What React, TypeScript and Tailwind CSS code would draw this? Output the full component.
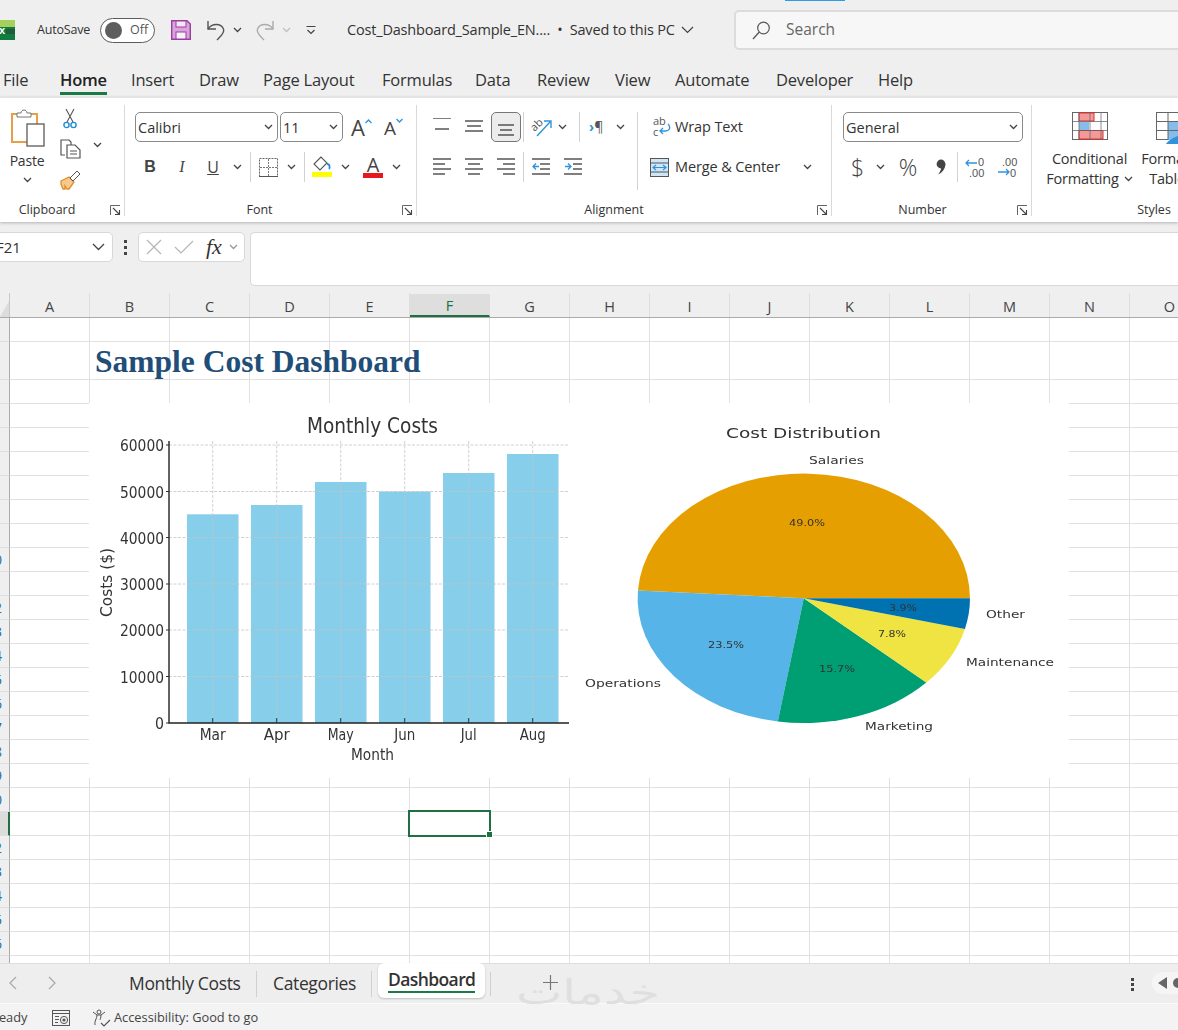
import React from "react";

const UI = "font-['Open_Sans','Noto_Sans',sans-serif]";

function Chev({ className = "", color = "#444" }: { className?: string; color?: string }) {
  return (
    <svg width="9" height="6" viewBox="0 0 9 6" className={"shrink-0 " + className}>
      <polyline points="1,1 4.5,4.5 8,1" fill="none" stroke={color} strokeWidth="1.3" />
    </svg>
  );
}

function Launcher() {
  return (
    <svg width="11" height="11" viewBox="0 0 11 11" className="absolute right-[3px] top-[0px]">
      <path d="M0.5 10V0.5H10" fill="none" stroke="#666" />
      <path d="M3 3L9.5 9.5M9.5 5V9.5H5" fill="none" stroke="#444" strokeWidth="1.1" />
    </svg>
  );
}

function Lines({ rows, w = 18, h = 18 }: { rows: number[][]; w?: number; h?: number }) {
  return (
    <svg width={w} height={h} viewBox={`0 0 ${w} ${h}`} className="shrink-0">
      {rows.map((r, i) => (
        <line key={i} x1={r[0]} x2={r[1]} y1={r[2]} y2={r[2]} stroke="#555" strokeWidth="1.5" />
      ))}
    </svg>
  );
}

function Group({ w, label, pad, children }: { w: string; label: string; pad: string; children: React.ReactNode }) {
  return (
    <div className={"shrink-0 h-[111px] flex flex-col border-r border-[#d9d9d9] " + w}>
      <div className="flex-1 min-h-0 pt-[7px]">{children}</div>
      <div className={"relative h-[11px] flex items-center justify-center text-[12.5px] leading-[11px] text-[#333] " + pad}>
        <span className="relative top-[-1px]">{label}</span>
        <Launcher />
      </div>
    </div>
  );
}

function Select({ w, text, size = "text-[14.5px]" }: { w: string; text: string; size?: string }) {
  return (
    <div className={"h-[30px] rounded-[5px] border border-[#8a8a8a] bg-white flex items-center justify-between pl-[2px] pr-[4px] shrink-0 " + w}>
      <span className={"text-[#333] relative top-px " + size}>{text}</span>
      <Chev />
    </div>
  );
}

function Sep({ h = "h-[30px]", m = "" }: { h?: string; m?: string }) {
  return <div className={"w-px bg-[#d2d2d2] shrink-0 " + h + " " + m} />;
}

function Undo({ color, className = "" }: { color: string; className?: string }) {
  return (
    <svg width="20" height="22" viewBox="0 0 20 22" className={className}>
      <path d="M2 2v8h8" fill="none" stroke={color} strokeWidth="1.4" />
      <path d="M2 10C6 4 15 4 17.5 10C19 14 14 18 11 21" fill="none" stroke={color} strokeWidth="1.4" />
    </svg>
  );
}

function TitleBar() {
  return (
    <div className="relative h-[60px] shrink-0 flex items-center text-[#333]">
      <div className="absolute left-[785px] top-0 w-[60px] h-px bg-[#2f9be6]" />
      <svg width="15" height="20" viewBox="0 0 15 20" className="mt-[-1px]">
        <rect width="15" height="20" fill="#107c41" />
        <rect width="15" height="7" fill="#a6cf5c" />
        <rect x="6" y="9" width="9" height="5" fill="#1f5c38" />
        <text x="-1" y="14" fontSize="11" fontWeight="700" fill="#fff" fontFamily="Liberation Sans">x</text>
      </svg>
      <span className="ml-[22px] text-[12.5px] tracking-[-0.2px] w-[63px]">AutoSave</span>
      <div className="w-[55px] h-[25px] rounded-full border border-[#5c5c5c] bg-white flex items-center pl-[4px] shrink-0">
        <div className="w-[17px] h-[17px] rounded-full bg-[#5e5e5e]" />
        <span className="ml-[8px] text-[12.5px] text-[#555]">Off</span>
      </div>
      <svg width="20" height="20" viewBox="0 0 20 20" className="ml-[16px] shrink-0">
        <path d="M0.7 0.7H16L19.3 4V19.3H0.7Z" fill="#d9a3dc" stroke="#9b3f9f" strokeWidth="1.4" />
        <rect x="5" y="1" width="10" height="6" fill="#f4e6f5" stroke="#9b3f9f" />
        <rect x="5" y="12" width="10" height="7" fill="#f9f1f9" stroke="#9b3f9f" />
      </svg>
      <Undo color="#555" className="ml-[15px]" />
      <Chev className="ml-[7px]" />
      <Undo color="#ababab" className="ml-[13px] scale-x-[-1]" />
      <Chev className="ml-[7px]" color="#c0c0c0" />
      <svg width="10" height="10" viewBox="0 0 10 10" className="ml-[15px] shrink-0">
        <line x1="0.5" x2="9.5" y1="1.5" y2="1.5" stroke="#444" />
        <polyline points="1.5,5 5,8.5 8.5,5" fill="none" stroke="#444" strokeWidth="1.2" />
      </svg>
      <span className="ml-[31px] text-[14.5px] tracking-[-0.18px] w-[335px] whitespace-nowrap">Cost_Dashboard_Sample_EN....&nbsp; •&nbsp; Saved to this PC</span>
      <svg width="13" height="8" viewBox="0 0 13 8" className="ml-[-1px] shrink-0">
        <polyline points="1,1 6.5,6.5 12,1" fill="none" stroke="#444" strokeWidth="1.2" />
      </svg>
      <div className="absolute left-[734px] top-[10px] w-[460px] h-[40px] rounded-[5px] border-2 border-[#dcdcdc] bg-[#f7f7f7] flex items-center">
        <svg width="19" height="19" viewBox="0 0 19 19" className="ml-[16px] shrink-0">
          <circle cx="11.5" cy="7" r="5.8" fill="none" stroke="#555" strokeWidth="1.2" />
          <line x1="7.3" y1="11" x2="1" y2="18" stroke="#555" strokeWidth="1.3" />
        </svg>
        <span className="ml-[15px] text-[15.5px] text-[#666]">Search</span>
      </div>
    </div>
  );
}

const TABS: [string, string][] = [
  ["File", "w-[57px]"],
  ["Home", "w-[71px] font-semibold"],
  ["Insert", "w-[68px]"],
  ["Draw", "w-[64px]"],
  ["Page Layout", "w-[119px]"],
  ["Formulas", "w-[93px]"],
  ["Data", "w-[62px]"],
  ["Review", "w-[78px]"],
  ["View", "w-[60px]"],
  ["Automate", "w-[101px]"],
  ["Developer", "w-[102px]"],
  ["Help", "w-[60px]"],
];

function MenuTabs() {
  return (
    <div className="h-[37px] shrink-0 flex pl-[3px] pt-[8px] text-[16.5px] tracking-[-0.2px] text-[#333] leading-[24px]">
      {TABS.map(([t, c]) => (
        <div key={t} className={"shrink-0 " + c}>
          <span className={"inline-block h-[27px] whitespace-nowrap " + (t === "Home" ? "border-b-[3px] border-[#1a7a45] text-[#222]" : "")}>{t}</span>
        </div>
      ))}
    </div>
  );
}

function ClipboardGroup() {
  return (
    <Group w="w-[125px]" label="Clipboard" pad="pr-[30px]">
      <div className="flex">
        <div className="w-[54px] flex flex-col items-center">
          <svg width="36" height="40" viewBox="0 0 36 40" className="mt-[-4px] ml-[2px]">
            <rect x="2" y="6" width="25" height="28" fill="#fff" stroke="#e6a04a" strokeWidth="2" />
            <path d="M7 9V5H11C11 1 17 1 17 5H21V9Z" fill="#fff" stroke="#777" />
            <rect x="17" y="16" width="17" height="22" fill="#fff" stroke="#666" strokeWidth="1.4" />
          </svg>
          <span className="text-[14px] tracking-[-0.2px] text-[#333] mt-[4px] leading-[18px]">Paste</span>
          <Chev className="mt-[7px]" />
        </div>
        <div className="flex flex-col items-center w-[32px]">
          <svg width="14" height="21" viewBox="0 0 14 21" className="mt-[-4px]">
            <path d="M3 1L10 14M11 1L4 14" stroke="#555" strokeWidth="1.1" fill="none" />
            <circle cx="3.5" cy="17" r="2.6" fill="none" stroke="#1f8ad8" strokeWidth="1.4" />
            <circle cx="10.5" cy="17" r="2.6" fill="none" stroke="#1f8ad8" strokeWidth="1.4" />
          </svg>
          <svg width="21" height="20" viewBox="0 0 21 20" className="mt-[10px]">
            <path d="M5 16H1V1H9L11 3V6" fill="none" stroke="#555" strokeWidth="1.2" />
            <path d="M7 6H15L20 11V19H7Z" fill="#fff" stroke="#555" strokeWidth="1.2" />
            <path d="M10 12H17M10 15H17" stroke="#555" />
          </svg>
          <svg width="21" height="20" viewBox="0 0 21 20" className="mt-[11px]">
            <path d="M1 11L9 7L14 12L9 19H7L5 16L5 19H3L1 14Z" fill="#f6c98f" stroke="#de8f2a" strokeWidth="1.3" />
            <path d="M10 8L17 1L20 4L13 11Z" fill="#fff" stroke="#555" />
          </svg>
        </div>
        <Chev className="ml-[7px] mt-[30px]" />
      </div>
    </Group>
  );
}

function BigA({ up }: { up: boolean }) {
  return (
    <div className="flex items-start shrink-0">
      <span className={(up ? "text-[22px]" : "text-[19px] mt-[2px]") + " leading-[26px] text-[#444]"}>A</span>
      <svg width="7" height="5" viewBox="0 0 7 5" className="mt-[5px] shrink-0">
        <polyline points={up ? "0.5,4 3.5,1 6.5,4" : "0.5,1 3.5,4 6.5,1"} fill="none" stroke="#2e93dc" strokeWidth="1.3" />
      </svg>
    </div>
  );
}

function FontGroup() {
  return (
    <Group w="w-[292px]" label="Font" pad="pr-[22px]">
      <div className="flex items-center pl-[10px]">
        <Select w="w-[143px]" text="Calibri" />
        <Select w="w-[63px] ml-[2px]" text="11" />
        <div className="ml-[8px]"><BigA up /></div>
        <div className="ml-[12px]"><BigA up={false} /></div>
      </div>
      <div className="flex items-center mt-[10px] h-[30px]">
        <span className="ml-[9px] w-[32px] text-center text-[16px] font-bold font-['Liberation_Sans'] text-[#444]">B</span>
        <span className="w-[32px] text-center text-[16px] italic font-['Liberation_Serif'] text-[#444]">I</span>
        <span className="w-[30px] text-center text-[16px] underline text-[#444]">U</span>
        <Chev className="ml-[5px]" />
        <Sep m="ml-[8px]" />
        <svg width="19" height="19" viewBox="0 0 19 19" className="ml-[8px] shrink-0">
          <rect x="0.5" y="0.5" width="18" height="18" fill="none" stroke="#666" strokeDasharray="2 1" />
          <path d="M9.5 1V18M1 9.5H18" stroke="#777" strokeDasharray="2 1" />
          <line x1="0" x2="19" y1="18.5" y2="18.5" stroke="#555" />
        </svg>
        <Chev className="ml-[9px]" />
        <Sep m="ml-[8px]" />
        <svg width="20" height="22" viewBox="0 0 20 22" className="ml-[7px] shrink-0">
          <path d="M9 1L2 8L8 14L15 7Z" fill="#fff" stroke="#555" strokeWidth="1.1" />
          <path d="M15 8C18 8 18 12 17 13" fill="none" stroke="#1f8ad8" strokeWidth="1.8" />
          <rect x="0" y="16" width="20" height="5" fill="#ffff00" />
        </svg>
        <Chev className="ml-[9px]" />
        <div className="ml-[13px] w-[20px] flex flex-col items-center shrink-0">
          <span className="text-[20px] leading-[17px] text-[#444]">A</span>
          <div className="w-[20px] h-[5px] bg-[#e8171b]" />
        </div>
        <Chev className="ml-[9px]" />
      </div>
    </Group>
  );
}

function AlignmentGroup() {
  return (
    <Group w="w-[415px]" label="Alignment" pad="pr-[20px]">
      <div className="flex">
        <div className="w-[220px] shrink-0">
          <div className="flex items-center h-[30px] pl-[16px]">
            <Lines rows={[[0, 18, 0], [2, 16, 11]]} />
            <div className="ml-[14px]"><Lines rows={[[0, 18, 3], [2, 16, 8], [0, 18, 13]]} /></div>
            <div className="ml-[8px] w-[30px] h-[30px] rounded-[5px] border border-[#777] bg-[#ececec] flex items-center justify-center shrink-0">
              <Lines rows={[[1, 17, 7], [3, 15, 12], [1, 17, 17]]} />
            </div>
            <Sep m="ml-[2px]" />
            <svg width="21" height="20" viewBox="0 0 21 20" className="ml-[7px] shrink-0">
              <text x="-1" y="12" fontSize="11" fill="#555" fontFamily="Open Sans" transform="rotate(-45 5 8)">ab</text>
              <path d="M6 19L19 5M13 4H20V11" fill="none" stroke="#2e93dc" strokeWidth="1.4" />
            </svg>
            <Chev className="ml-[6px]" />
            <Sep m="ml-[12px]" />
            <span className="ml-[9px] text-[14px] leading-[14px] text-[#555] w-[16px] whitespace-nowrap"><span className="text-[#2e93dc] font-bold">›</span>¶</span>
            <Chev className="ml-[11px]" />
          </div>
          <div className="flex items-center h-[30px] mt-[10px] pl-[16px]">
            <Lines rows={[[0, 18, 1], [0, 12, 6], [0, 18, 11], [0, 12, 16]]} />
            <div className="ml-[14px]"><Lines rows={[[0, 18, 1], [3, 15, 6], [0, 18, 11], [3, 15, 16]]} /></div>
            <div className="ml-[14px]"><Lines rows={[[0, 18, 1], [6, 18, 6], [0, 18, 11], [6, 18, 16]]} /></div>
            <Sep m="ml-[8px]" />
            <svg width="18" height="18" viewBox="0 0 18 18" className="ml-[8px] shrink-0">
              <path d="M0 1H18M8 6H18M8 11H18M0 16H18" stroke="#555" strokeWidth="1.4" />
              <path d="M7 8.5H1M4 5.5L1 8.5L4 11.5" fill="none" stroke="#2e93dc" strokeWidth="1.3" />
            </svg>
            <svg width="18" height="18" viewBox="0 0 18 18" className="ml-[14px] shrink-0">
              <path d="M0 1H18M9 6H18M9 11H18M0 16H18" stroke="#555" strokeWidth="1.4" />
              <path d="M1 8.5H7M4 5.5L7 8.5L4 11.5" fill="none" stroke="#2e93dc" strokeWidth="1.3" />
            </svg>
          </div>
        </div>
        <Sep h="h-[78px]" />
        <div className="flex-1 text-[14.5px] tracking-[-0.12px] text-[#333]">
          <div className="flex items-center h-[30px] pl-[14px]">
            <svg width="19" height="22" viewBox="0 0 19 22" className="shrink-0">
              <text x="1" y="9" fontSize="11" fill="#555" fontFamily="Open Sans">ab</text>
              <text x="1" y="20" fontSize="11" fill="#555" fontFamily="Open Sans">c</text>
              <path d="M16 8C19 11 18 15 13 15H8M11 12L8 15L11 18" fill="none" stroke="#2e93dc" strokeWidth="1.3" />
            </svg>
            <span className="ml-[4px]">Wrap Text</span>
          </div>
          <div className="flex items-center h-[30px] mt-[10px] pl-[12px]">
            <svg width="19" height="19" viewBox="0 0 19 19" className="shrink-0">
              <rect x="0.5" y="0.5" width="18" height="18" fill="#cfe6f7" stroke="#555" />
              <path d="M0 5H19M0 14H19" stroke="#555" />
              <path d="M3 9.5H16M6 7L3 9.5L6 12M13 7L16 9.5L13 12" fill="none" stroke="#2e93dc" strokeWidth="1.2" />
            </svg>
            <span className="ml-[6px] w-[128px] whitespace-nowrap">Merge &amp; Center</span>
            <Chev />
          </div>
        </div>
      </div>
    </Group>
  );
}

function NumberGroup() {
  return (
    <Group w="w-[200px]" label="Number" pad="pr-[18px]">
      <div className="pl-[11px]"><Select w="w-[180px]" text="General" /></div>
      <div className="flex items-center h-[30px] mt-[10px] text-[#444]">
        <span className="ml-[19px] w-[12px] text-center text-[23px] leading-[30px] font-light">$</span>
        <Chev className="ml-[13px]" />
        <span className="ml-[9px] text-[23px] leading-[30px] w-[28px] text-center font-light">%</span>
        <svg width="10" height="16" viewBox="0 0 10 16" className="ml-[14px] shrink-0">
          <circle cx="5" cy="5" r="4.4" fill="#444" />
          <path d="M9.4 5C9.4 10 6 14 2 15.5C5 12 5.5 9 5 8Z" fill="#444" />
        </svg>
        <Sep m="ml-[11px]" />
        <svg width="22" height="22" viewBox="0 0 22 22" className="ml-[7px] shrink-0">
          <text x="13" y="10" fontSize="11" fill="#555" fontFamily="Liberation Sans">0</text>
          <text x="4" y="21" fontSize="11" fill="#555" fontFamily="Liberation Sans">.00</text>
          <path d="M12 7H1M4 4L1 7L4 10" fill="none" stroke="#2e93dc" strokeWidth="1.3" />
        </svg>
        <svg width="22" height="22" viewBox="0 0 22 22" className="ml-[10px] shrink-0">
          <text x="5" y="10" fontSize="11" fill="#555" fontFamily="Liberation Sans">.00</text>
          <text x="13" y="21" fontSize="11" fill="#555" fontFamily="Liberation Sans">0</text>
          <path d="M1 16H12M9 13L12 16L9 19" fill="none" stroke="#2e93dc" strokeWidth="1.3" />
        </svg>
      </div>
    </Group>
  );
}

function StylesGroup() {
  return (
    <div className="h-[111px] flex flex-col shrink-0 w-[220px]">
      <div className="flex flex-1 pt-[7px]">
        <div className="w-[102px] shrink-0 flex flex-col items-center pl-[13px] text-[14.5px] tracking-[-0.2px] text-[#333] leading-[20px]">
          <svg width="36" height="28" viewBox="0 0 36 28">
            <rect x="0.5" y="0.5" width="35" height="27" fill="#fff" stroke="#666" />
            <rect x="7" y="1" width="15" height="8" fill="#f39a99" stroke="#e62a2a" />
            <rect x="7" y="10" width="10" height="8" fill="#85bcea" />
            <rect x="7" y="18.5" width="24" height="8.5" fill="#f39a99" stroke="#e62a2a" />
            <path d="M7 0V28M18 0V28M29 0V28M0 9.5H36M0 18.5H36" stroke="#666" strokeOpacity="0.75" />
          </svg>
          <span className="mt-[9px] whitespace-nowrap">Conditional</span>
          <span className="whitespace-nowrap flex items-center">Formatting<Chev className="ml-[5px]" /></span>
        </div>
        <div className="ml-[5px] flex flex-col items-center w-[70px] text-[14.5px] tracking-[-0.2px] text-[#333] leading-[20px] shrink-0">
          <svg width="36" height="36" viewBox="0 0 36 36" className="h-[36px] mb-[-8px]">
            <rect x="0.5" y="0.5" width="35" height="27" fill="#fff" stroke="#666" />
            <rect x="12" y="10" width="24" height="18" fill="#85bcea" />
            <path d="M12 0V28M0 9.5H36M0 18.5H36" stroke="#666" />
            <path d="M10 32C14 26 20 26 28 20L36 18V32Z" fill="#2e93dc" />
          </svg>
          <span className="mt-[9px] whitespace-nowrap">Format as</span>
          <span className="whitespace-nowrap flex items-center">Table<Chev className="ml-[5px]" /></span>
        </div>
      </div>
      <div className="h-[12px] w-[102px] ml-[71px] flex items-center justify-center text-[12.5px] leading-[12px] text-[#333] mt-[1px]">Styles</div>
    </div>
  );
}

function Ribbon() {
  return (
    <div className="relative z-10 h-[125px] shrink-0 bg-white flex py-[7px] shadow-[0_1px_3px_rgba(0,0,0,0.25)] border-t border-[#e4e4e4]">
      <ClipboardGroup />
      <FontGroup />
      <AlignmentGroup />
      <NumberGroup />
      <StylesGroup />
    </div>
  );
}

function FormulaBar() {
  return (
    <div className="h-[71px] shrink-0 flex items-start pt-[10px]">
      <div className="w-[117px] h-[30px] ml-[-4px] bg-white rounded-[5px] border border-[#d8d8d8] flex items-center justify-between pr-[7px] shrink-0 overflow-hidden">
        <span className="text-[15px] text-[#333] ml-[-1px]">F21</span>
        <svg width="13" height="8" viewBox="0 0 13 8"><polyline points="1,1 6.5,6.5 12,1" fill="none" stroke="#444" strokeWidth="1.3" /></svg>
      </div>
      <div className="flex flex-col gap-[3px] ml-[11px] mt-[8px] shrink-0">
        <div className="w-[3px] h-[3px] bg-[#444]" />
        <div className="w-[3px] h-[3px] bg-[#444]" />
        <div className="w-[3px] h-[3px] bg-[#444]" />
      </div>
      <div className="w-[107px] h-[30px] ml-[11px] bg-white rounded-[5px] border border-[#d8d8d8] flex items-center shrink-0">
        <svg width="16" height="16" viewBox="0 0 16 16" className="ml-[7px] shrink-0"><path d="M1 1L15 15M15 1L1 15" stroke="#b5b5b5" strokeWidth="1.2" /></svg>
        <svg width="20" height="14" viewBox="0 0 20 14" className="ml-[12px] shrink-0"><path d="M1 7L7 13L19 1" fill="none" stroke="#b5b5b5" strokeWidth="1.2" /></svg>
        <span className="ml-[12px] font-['Liberation_Serif'] italic text-[22px] leading-[24px] text-[#333] w-[18px]">fx</span>
        <Chev className="ml-[5px]" color="#999" />
      </div>
      <div className="ml-[5px] flex-1 h-[54px] bg-white rounded-l-[5px] border border-r-0 border-[#d8d8d8]" />
    </div>
  );
}

const COLS = ["A", "B", "C", "D", "E", "F", "G", "H", "I", "J", "K", "L", "M", "N", "O"];

function ColumnHeader() {
  return (
    <div className="h-[25px] shrink-0 flex border-b border-[#ababab] text-[14.5px] text-[#444] overflow-hidden relative">
      <div className="w-[10px] shrink-0 border-r border-[#c8c8c8] flex items-end">
        <svg width="9" height="22" viewBox="0 0 9 22"><path d="M9 6V22H0Z" fill="#dcdcdc" /></svg>
      </div>
      {COLS.map((c) => (
        <div key={c} className={"w-[80px] shrink-0 flex items-center justify-center border-r border-[#dedede] pt-[3px] " + (c === "F" ? "bg-[#dedede] border-b-2 border-b-[#1e6f42] text-[#1e6f42] mt-px" : "")}>
          {c}
        </div>
      ))}
    </div>
  );
}

const ROWS = Array.from({ length: 27 }, (_, i) => i + 1);

function Row({ n }: { n: number }) {
  const active = n === 21;
  return (
    <div className={"flex shrink-0 " + (n === 2 ? "h-[38px]" : "h-[24px]")}>
      <div className={"w-[10px] shrink-0 overflow-hidden flex items-center justify-end border-r border-[#ababab] border-b border-b-[#dedede] text-[14px] whitespace-nowrap text-[#2a6aa0] " + (active ? "bg-[#dcdcdc] border-r-2 border-r-[#1e6f42]" : "bg-[#efefef]")}>
        <span className={n < 10 ? "mr-[16px]" : "mr-[7px]"}>{n}</span>
      </div>
      {COLS.map((c) => (
        <div key={c} className="w-[80px] shrink-0 border-r border-b border-[#e1e1e1] bg-white" />
      ))}
    </div>
  );
}

function polar(cx: number, cy: number, rx: number, ry: number, deg: number) {
  const t = (deg * Math.PI) / 180;
  return [cx + rx * Math.cos(t), cy - ry * Math.sin(t)];
}

const SLICES: [number, number, string][] = [
  [0, 176.4, "#e69f00"],
  [176.4, 261, "#56b4e9"],
  [261, 317.5, "#009e73"],
  [317.5, 345.8, "#f0e442"],
  [345.8, 360, "#0072b2"],
];

function ChartText({ x, y, len, size, children, anchor = "start", fill = "#333" }: { x: number; y: number; len: number; size: number; children: string; anchor?: "start" | "middle"; fill?: string }) {
  return (
    <text x={x} y={y} fontSize={size} fill={fill} textAnchor={anchor} textLength={len} lengthAdjust="spacingAndGlyphs" fontFamily="DejaVu Sans">
      {children}
    </text>
  );
}

function Charts() {
  const bars: [string, number, number][] = [
    ["Mar", 187, 514.3],
    ["Apr", 251, 505],
    ["May", 315, 482],
    ["Jun", 379, 491.5],
    ["Jul", 443, 473],
    ["Aug", 507, 454],
  ];
  const ticks: [string, number][] = [
    ["60000", 445],
    ["50000", 491.5],
    ["40000", 537.5],
    ["30000", 584],
    ["20000", 630],
    ["10000", 676.5],
  ];
  const cx = 803.8, cy = 598.3, rx = 166.2, ry = 124.7;
  return (
    <svg width="980" height="375" viewBox="89 403 980 375" className="absolute left-[89px] top-[85px] bg-white">
      <g style={{ filter: "blur(0.3px)" }}>
        <ChartText x={372.5} y={433} len={131} size={22} anchor="middle">Monthly Costs</ChartText>
        {bars.map(([, x, top]) => (
          <rect key={x} x={x} y={top} width={51.5} height={723 - top} fill="#87ceeb" />
        ))}
        {ticks.map(([t, y]) => (
          <line key={t} x1={169} x2={569} y1={y} y2={y} stroke="#c4c4c4" strokeWidth="0.8" strokeDasharray="3 1.5" />
        ))}
        {bars.map(([m, x]) => (
          <line key={m} x1={x + 25.7} x2={x + 25.7} y1={441} y2={723} stroke="#c4c4c4" strokeWidth="0.8" strokeDasharray="3 1.5" />
        ))}
        <path d="M169 441V723H569" fill="none" stroke="#222" strokeWidth="1.4" />
        {ticks.map(([t, y]) => (
          <g key={t}>
            <line x1={166} x2={169} y1={y} y2={y} stroke="#333" />
            <ChartText x={120} y={y + 6} len={44} size={16.5}>{t}</ChartText>
          </g>
        ))}
        <line x1={166} x2={169} y1={723} y2={723} stroke="#333" />
        <ChartText x={155} y={729} len={9} size={16.5}>0</ChartText>
        {bars.map(([m, x]) => (
          <g key={m}>
            <line x1={x + 25.7} x2={x + 25.7} y1={718} y2={723} stroke="#333" />
            <ChartText x={x + 25.7} y={740} len={m === "Jul" ? 16 : m === "Jun" ? 21 : 26} size={16.5} anchor="middle">{m}</ChartText>
          </g>
        ))}
        <ChartText x={372.5} y={760} len={43} size={16.5} anchor="middle">Month</ChartText>
        <g transform="rotate(-90 112 582.5)">
          <ChartText x={112} y={582.5} len={69} size={15.5} anchor="middle">Costs ($)</ChartText>
        </g>

        {SLICES.map(([a, b, color]) => {
          const [x1, y1] = polar(cx, cy, rx, ry, a);
          const [x2, y2] = polar(cx, cy, rx, ry, b);
          const large = b - a > 180 ? 1 : 0;
          return <path key={color} d={`M${cx} ${cy}L${x1} ${y1}A${rx} ${ry} 0 ${large} 0 ${x2} ${y2}Z`} fill={color} />;
        })}
        <ChartText x={726} y={438} len={155} size={14}>Cost Distribution</ChartText>
        <ChartText x={809} y={464} len={55} size={11}>Salaries</ChartText>
        <ChartText x={986} y={618} len={39} size={11}>Other</ChartText>
        <ChartText x={966} y={666} len={88} size={11}>Maintenance</ChartText>
        <ChartText x={865} y={730} len={68} size={11}>Marketing</ChartText>
        <ChartText x={585} y={687} len={76} size={11}>Operations</ChartText>
        <ChartText x={789} y={526} len={36} size={9.5}>49.0%</ChartText>
        <ChartText x={708} y={648} len={36} size={9.5}>23.5%</ChartText>
        <ChartText x={819} y={672} len={36} size={9.5}>15.7%</ChartText>
        <ChartText x={878} y={637} len={28} size={9.5}>7.8%</ChartText>
        <ChartText x={889} y={611} len={28} size={9.5}>3.9%</ChartText>
      </g>
    </svg>
  );
}

function Grid() {
  return (
    <div className="relative flex-1 min-h-0 overflow-hidden bg-white flex flex-col">
      {ROWS.map((n) => (
        <Row key={n} n={n} />
      ))}
      <div className="absolute left-[95px] top-[26px] h-[36px] flex items-center font-['Liberation_Serif'] font-bold text-[31.5px] text-[#1f4e79] whitespace-nowrap">
        Sample Cost Dashboard
      </div>
      <Charts />
      <div className="absolute left-[408px] top-[492px] w-[83px] h-[27px] border-2 border-[#1e6f42]" />
      <div className="absolute left-[486px] top-[513px] w-[5px] h-[5px] bg-[#1e6f42] border border-white box-content" />
    </div>
  );
}

function SheetTabs() {
  return (
    <div className="relative h-[40px] shrink-0 flex bg-[#eeeeee] border-t border-[#dedede] text-[#333]">
      <svg width="9" height="14" viewBox="0 0 9 14" className="ml-[8px] mt-[12px] shrink-0"><polyline points="8,1 2,7 8,13" fill="none" stroke="#aaa" strokeWidth="1.3" /></svg>
      <svg width="9" height="14" viewBox="0 0 9 14" className="ml-[31px] mt-[12px] shrink-0"><polyline points="1,1 7,7 1,13" fill="none" stroke="#aaa" strokeWidth="1.3" /></svg>
      <span className="ml-[72px] mt-[7px] text-[17.5px] tracking-[-0.36px] leading-[24px] w-[128px] whitespace-nowrap border-r border-[#cfcfcf] h-[26px]">Monthly Costs</span>
      <span className="ml-[16px] mt-[7px] text-[17.5px] tracking-[-0.36px] leading-[24px] w-[99px] whitespace-nowrap border-r border-[#cfcfcf] h-[26px]">Categories</span>
      <div className="ml-[6px] w-[107px] h-[35px] bg-white rounded-[6px] shadow-[0_1px_2px_rgba(0,0,0,0.2)] flex flex-col items-center shrink-0 -mt-px">
        <span className="text-[17.5px] font-semibold tracking-[-0.6px] leading-[24px] mt-[4px] border-b-[2px] border-[#1a7a45] h-[26px] w-[87px] text-center whitespace-nowrap">Dashboard</span>
      </div>
      <div className="w-px h-[24px] bg-[#cfcfcf] ml-[5px] mt-[8px] shrink-0" />
      <svg width="15" height="15" viewBox="0 0 15 15" className="absolute left-[543px] top-[11px] z-10"><path d="M7.5 0V15M0 7.5H15" stroke="#777" strokeWidth="1.2" /></svg>
      <div className="absolute left-[1131px] top-[14px] flex flex-col gap-[2px]">
        <div className="w-[3px] h-[3px] bg-[#444]" />
        <div className="w-[3px] h-[3px] bg-[#444]" />
        <div className="w-[3px] h-[3px] bg-[#444]" />
      </div>
      <div className="absolute left-[1152px] top-[8px] w-[40px] h-[22px] rounded-l-full bg-[#f5f5f5] flex items-center pl-[6px]">
        <svg width="9" height="12" viewBox="0 0 9 12"><path d="M9 0V12L0 6Z" fill="#666" /></svg>
        <div className="w-[10px] h-[10px] rounded-full bg-[#666] ml-[6px]" />
      </div>
    </div>
  );
}

function StatusBar() {
  return (
    <div className="relative h-[27px] shrink-0 bg-[#f3f3f3] border-t border-[#fafafa] flex items-center text-[12.8px] text-[#444] pt-px">
      <span className="ml-[-9px] w-[52px]">Ready</span>
      <svg width="18" height="16" viewBox="0 0 18 16" className="ml-[9px] shrink-0">
        <rect x="0.5" y="0.5" width="17" height="15" fill="none" stroke="#555" />
        <path d="M0 3.5H18M3 6.5H7M3 9.5H7M3 12.5H6" stroke="#555" />
        <circle cx="12" cy="10" r="3.6" fill="#f3f3f3" stroke="#555" />
        <circle cx="12" cy="10" r="1.6" fill="#555" />
      </svg>
      <svg width="19" height="18" viewBox="0 0 19 18" className="ml-[22px] shrink-0">
        <circle cx="7" cy="3" r="2" fill="none" stroke="#555" />
        <path d="M1 3L5 6H9L13 3M5 6C5 10 2 12 3 16M9 6C9 9 8 10 8 11" fill="none" stroke="#555" />
        <path d="M9 14L12 17L18 11" fill="none" stroke="#555" strokeWidth="1.2" />
      </svg>
      <span className="ml-[3px] whitespace-nowrap">Accessibility: Good to go</span>
      <span className="absolute left-[518px] top-[-34px] w-[140px] text-center scale-x-[1.45] font-['DejaVu_Sans',sans-serif] text-[34px] leading-[44px] text-[#dfdfdf] whitespace-nowrap" dir="rtl">خدمات</span>
    </div>
  );
}

export default function App() {
  return (
    <div className={"relative w-[1178px] h-[1030px] overflow-hidden bg-[#efefef] flex flex-col " + UI}>
      <TitleBar />
      <MenuTabs />
      <Ribbon />
      <FormulaBar />
      <ColumnHeader />
      <Grid />
      <SheetTabs />
      <StatusBar />
    </div>
  );
}
